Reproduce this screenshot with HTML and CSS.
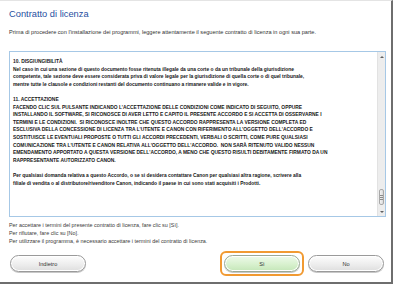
FILE: index.html
```html
<!DOCTYPE html>
<html lang="it">
<head>
    <meta charset="UTF-8">
    <title>Contratto di licenza</title>
    <link rel="stylesheet" href="styles.css">
</head>
<body>
    <div class="window">
        <h1 class="title">Contratto di licenza</h1>
        <p class="intro">Prima di procedere con l'installazione dei programmi, leggere attentamente il seguente contratto di licenza in ogni sua parte.</p>

        <div class="license-box">
            <div class="license-text">
                <p>10. DISGIUNGIBILITÀ<br>
                Nel caso in cui una sezione di questo documento fosse ritenuta illegale da una corte o da un tribunale della giurisdizione<br>
                competente, tale sezione deve essere considerata priva di valore legale per la giurisdizione di quella corte o di quel tribunale,<br>
                mentre tutte le clausole e condizioni restanti del documento continuano a rimanere valide e in vigore.</p>

                <p>11. ACCETTAZIONE<br>
                FACENDO CLIC SUL PULSANTE INDICANDO L'ACCETTAZIONE DELLE CONDIZIONI COME INDICATO DI SEGUITO, OPPURE<br>
                INSTALLANDO IL SOFTWARE, SI RICONOSCE DI AVER LETTO E CAPITO IL PRESENTE ACCORDO E SI ACCETTA DI OSSERVARNE I<br>
                TERMINI E LE CONDIZIONI.&nbsp; SI RICONOSCE INOLTRE CHE QUESTO ACCORDO RAPPRESENTA LA VERSIONE COMPLETA ED<br>
                ESCLUSIVA DELLA CONCESSIONE DI LICENZA TRA L'UTENTE E CANON CON RIFERIMENTO ALL'OGGETTO DELL'ACCORDO E<br>
                SOSTITUISCE LE EVENTUALI PROPOSTE O TUTTI GLI ACCORDI PRECEDENTI, VERBALI O SCRITTI, COME PURE QUALSIASI<br>
                COMUNICAZIONE TRA L'UTENTE E CANON RELATIVA ALL'OGGETTO DELL'ACCORDO.&nbsp; NON SARÀ RITENUTO VALIDO NESSUN<br>
                EMENDAMENTO APPORTATO A QUESTA VERSIONE DELL'ACCORDO, A MENO CHE QUESTO RISULTI DEBITAMENTE FIRMATO DA UN<br>
                RAPPRESENTANTE AUTORIZZATO CANON.</p>

                <p>Per qualsiasi domanda relativa a questo Accordo, o se si desidera contattare Canon per qualsiasi altra ragione, scrivere alla<br>
                filiale di vendita o al distributore/rivenditore Canon, indicando il paese in cui sono stati acquisiti i Prodotti.</p>
            </div>
            <div class="scrollbar">
                <div class="scroll-btn"><span class="arrow-up"></span></div>
                <div class="scroll-track">
                    <div class="scroll-thumb"></div>
                </div>
                <div class="scroll-btn"><span class="arrow-down"></span></div>
            </div>
        </div>

        <div class="notes">
            <p>Per accettare i termini del presente contratto di licenza, fare clic su [Sì].</p>
            <p>Per rifiutare, fare clic su [No].</p>
            <p>Per utilizzare il programma, è necessario accettare i termini del contratto di licenza.</p>
        </div>

        <div class="actions">
            <button class="btn">Indietro</button>
            <div class="actions-right">
                <span class="focus-ring">
                    <button class="btn btn-yes">Sì</button>
                </span>
                <button class="btn">No</button>
            </div>
        </div>
    </div>
</body>
</html>
```

FILE: styles.css
```css
:root {
    --title-color: #1f4f9f;
    --text-color: #333;
    --box-border: #a6c8e6;
    --frame-color: #6e6e6e;
    --focus-color: #f19a32;
}

* {
    margin: 0;
    padding: 0;
    box-sizing: border-box;
}

body {
    font-family: "Liberation Sans", Arial, sans-serif;
    background: #fff;
    color: var(--text-color);
}

.window {
    width: 393px;
    height: 284px;
    padding: 8px 7px 0 9px;
    border-top: 1px solid #e4e4e4;
    border-right: 2px solid var(--frame-color);
    border-bottom: 2px solid var(--frame-color);
    display: flex;
    flex-direction: column;
}

.title {
    font-size: 9.3px;
    font-weight: normal;
    line-height: 11px;
    color: var(--title-color);
}

.intro {
    margin-top: 8px;
    font-size: 5.6px;
    line-height: 8px;
}

/* area del contratto con barra di scorrimento */
.license-box {
    margin-top: 15px;
    width: 377px;
    height: 166px;
    border: 1px solid var(--box-border);
    display: flex;
}

.license-text {
    flex: 1;
    padding: 6px 3px 0 3px;
    font-size: 4.9px;
    font-weight: bold;
    line-height: 7.6px;
    color: #161616;
    overflow: hidden;
    white-space: nowrap;
}

.license-text p {
    margin-bottom: 7.6px;
}

.scrollbar {
    width: 8px;
    background: #ededed;
    border-left: 1px solid #e2e2e2;
    display: flex;
    flex-direction: column;
}

.scroll-btn {
    height: 9px;
    display: flex;
    align-items: center;
    justify-content: center;
}

.arrow-up,
.arrow-down {
    width: 0;
    height: 0;
    border-left: 2px solid transparent;
    border-right: 2px solid transparent;
}

.arrow-up {
    border-bottom: 2px solid #606060;
}

.arrow-down {
    border-top: 2px solid #606060;
}

.scroll-track {
    flex: 1;
    display: flex;
    flex-direction: column;
    justify-content: flex-end;
    padding-bottom: 2px;
}

.scroll-thumb {
    height: 16px;
    margin: 0 1px;
    border: 1px solid #a8a8a8;
    border-radius: 2px;
    background:
        repeating-linear-gradient(#8a8a8a 0 1px, transparent 1px 2px) center / 3px 5px no-repeat,
        linear-gradient(90deg, #f4f4f4, #dadada);
}

.notes {
    margin-top: 4px;
    font-size: 5.4px;
    line-height: 8px;
    color: #3a3a3a;
}

.actions {
    margin-top: 6px;
    display: flex;
    justify-content: space-between;
    align-items: center;
    padding-left: 1px;
}

.actions-right {
    display: flex;
    align-items: center;
    gap: 4px;
}

.btn {
    width: 76px;
    height: 17px;
    font-family: inherit;
    font-size: 5.6px;
    color: #333;
    border: 1px solid #9a9a9a;
    border-radius: 9px;
    background: linear-gradient(#fdfdfd, #ececec 60%, #dedede);
    box-shadow: inset 0 0 0 1px #fff, 0 1px 0 #c8c8c8;
}

.focus-ring {
    display: flex;
    padding: 2px;
    border: 2px solid var(--focus-color);
    border-radius: 6px;
}

.btn-yes {
    border-color: #9aa996;
    background: linear-gradient(#eefaea, #d6f0cc 60%, #c4e6b8);
}
```
